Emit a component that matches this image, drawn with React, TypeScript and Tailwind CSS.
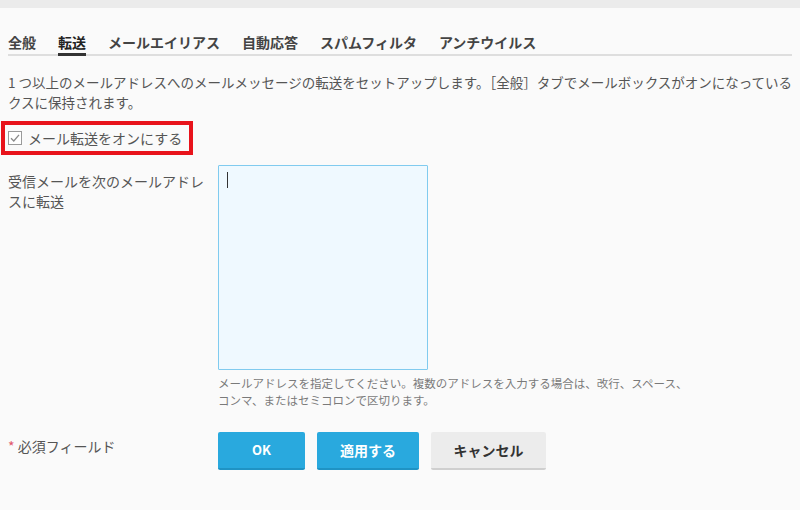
import React from 'react';

const tabs = ['全般', '転送', 'メールエイリアス', '自動応答', 'スパムフィルタ', 'アンチウイルス'];

const CheckIcon = () => (
  <svg width="14" height="14" viewBox="0 0 14 14" className="flex-shrink-0">
    <rect x="0.5" y="0.5" width="13" height="13" fill="#fff" stroke="#9a9a9a" />
    <path d="M3 7.2 L5.8 10 L11 3.8" fill="none" stroke="#8a8a8a" strokeWidth="1.3" />
  </svg>
);

export default function App() {
  return (
    <div
      className="w-[800px] h-[510px] overflow-hidden bg-[#fafafa] text-[#444]"
      style={{ fontFamily: '"Noto Sans CJK JP", "Noto Sans", sans-serif' }}
    >
      {/* top strip */}
      <div className="h-[8px] bg-[#ebebeb]" />

      <div className="px-2">
        {/* tabs */}
        <div className="mt-[24px] flex gap-[22px] border-b-2 border-[#dedede]">
          {tabs.map((t, i) => (
            <div
              key={t}
              className={`-mb-[2px] pb-[1px] text-[14px] leading-[20px] font-bold border-b-[3px] ${
                i === 1 ? 'border-[#333] text-[#222]' : 'border-transparent text-[#444]'
              }`}
            >
              {t}
            </div>
          ))}
        </div>

        {/* description */}
        <div className="mt-[16px] text-[13.5px] leading-[20px] text-[#555]">
          <div className="whitespace-nowrap overflow-hidden">
            1 つ以上のメールアドレスへのメールメッセージの転送をセットアップします。［全般］タブでメールボックスがオンになっている場合は、メッセージのコピーはメールボッ
          </div>
          <div>クスに保持されます。</div>
        </div>

        {/* highlighted checkbox */}
        <div className="mt-[9px] -ml-[7px] w-[192px] h-[34px] border-4 border-[#e8131b] flex items-center gap-[6px] pl-[3px]">
          <CheckIcon />
          <span className="text-[14px] leading-[20px] text-[#555]">メール転送をオンにする</span>
        </div>

        {/* forward to */}
        <div className="mt-[10px] flex">
          <div className="w-[210px] pt-[6px] pr-[10px] text-[14px] leading-[20px] text-[#555]">
            受信メールを次のメールアドレスに転送
          </div>
          <div>
            <div className="w-[210px] h-[205px] border border-[#80cbef] bg-[#eff9ff] rounded-[1px] pl-[8px] pt-[6px]">
              <div className="w-px h-[16px] bg-[#333]" />
            </div>
            <div className="mt-[5px] text-[11.5px] leading-[17px] text-[#7a7a7a] whitespace-nowrap">
              メールアドレスを指定してください。複数のアドレスを入力する場合は、改行、スペース、
              <br />
              コンマ、またはセミコロンで区切ります。
            </div>
          </div>
        </div>

        {/* buttons */}
        <div className="mt-[23px] flex">
          <div className="w-[210px] pt-[4px] text-[14px] leading-[20px] text-[#555]">
            <span className="text-[#e0566c]">*</span> 必須フィールド
          </div>
          <div className="flex gap-[12px]">
            <button className="w-[87px] h-[38px] rounded-[2px] bg-[#29a9de] border-b-2 border-[#1f93c4] text-white text-[13px] font-bold">
              OK
            </button>
            <button className="w-[102px] h-[38px] rounded-[2px] bg-[#29a9de] border-b-2 border-[#1f93c4] text-white text-[14px] font-bold">
              適用する
            </button>
            <button className="w-[115px] h-[38px] rounded-[2px] bg-[#ececec] border-b-2 border-[#cfcfcf] text-[#333] text-[14px] font-bold">
              キャンセル
            </button>
          </div>
        </div>
      </div>
    </div>
  );
}
